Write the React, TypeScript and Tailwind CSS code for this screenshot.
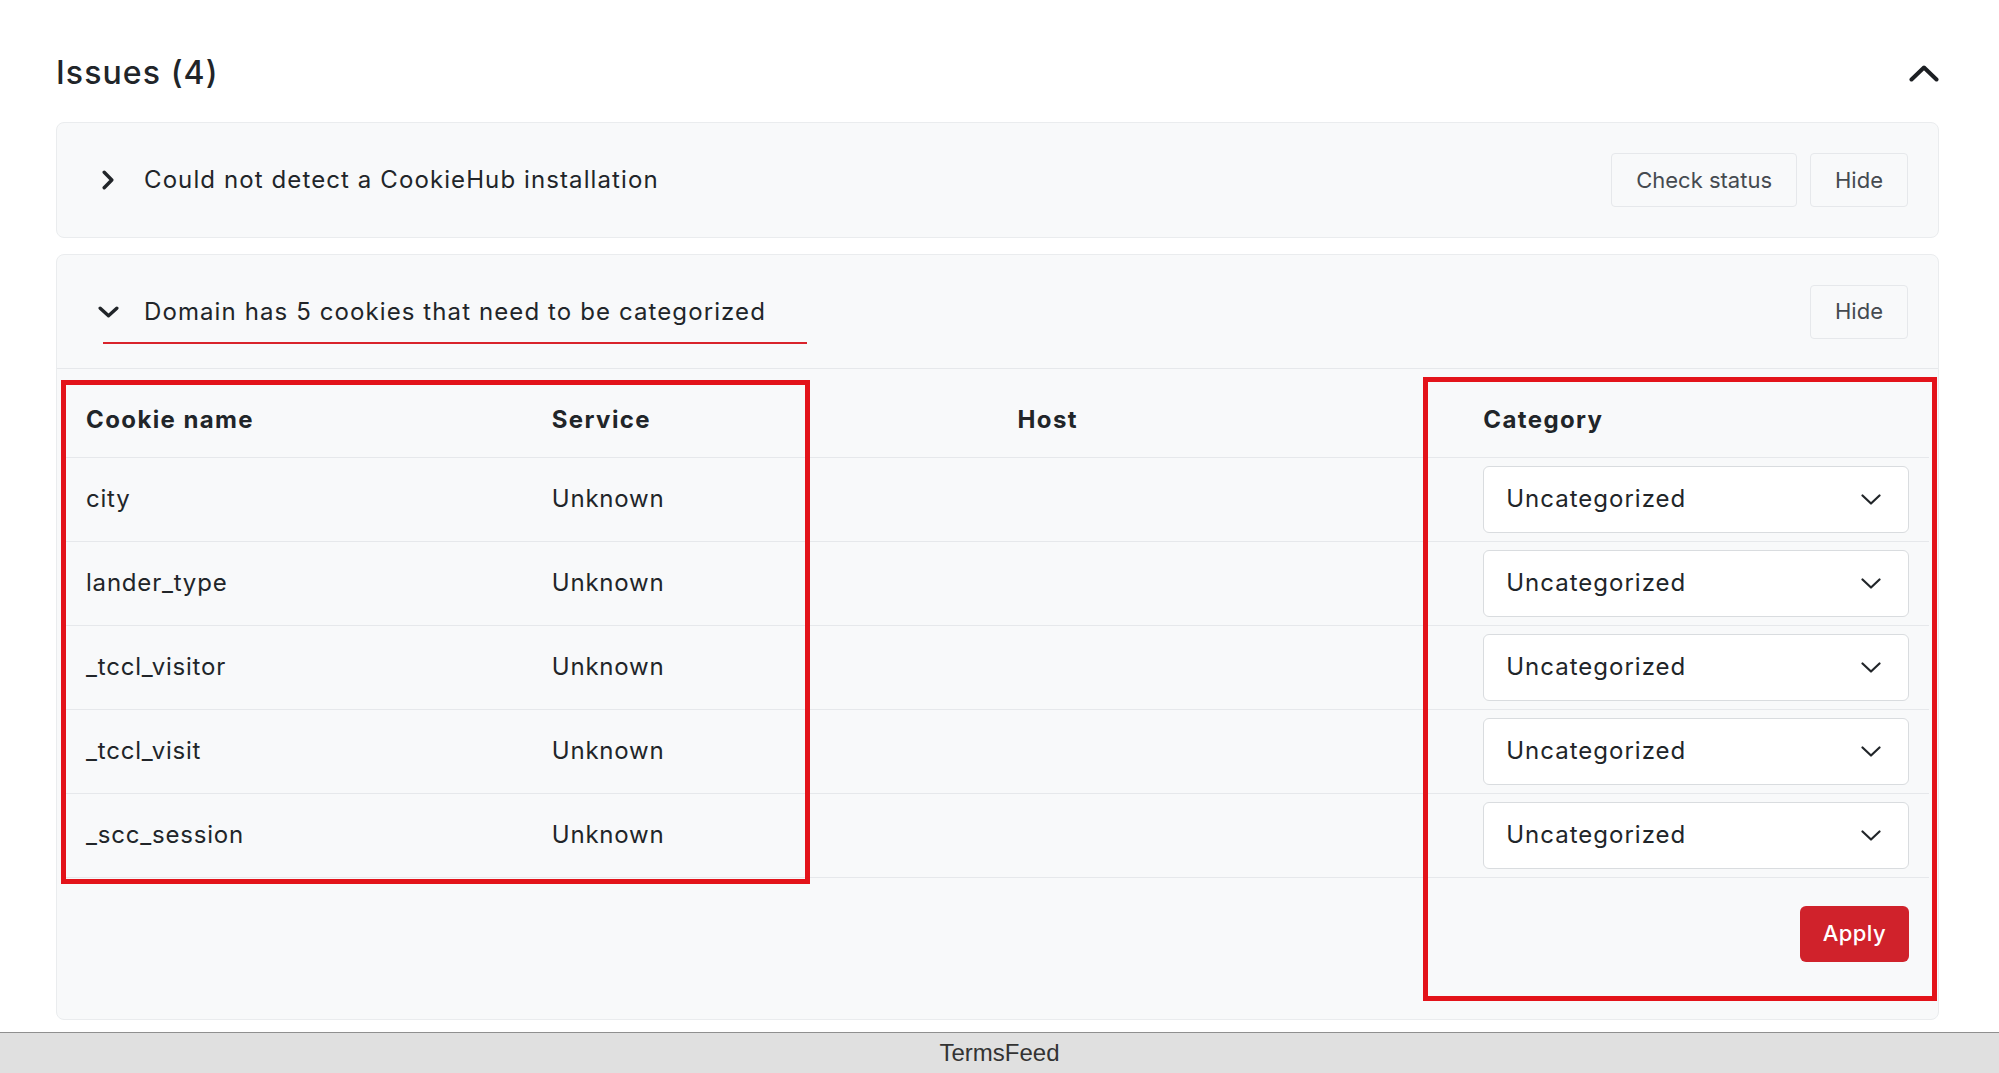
import React from "react";

const cookies = ["city", "lander_type", "_tccl_visitor", "_tccl_visit", "_scc_session"];

function Chevron({ dir, className }: { dir: "right" | "down" | "up"; className?: string }) {
  if (dir === "right")
    return (
      <svg viewBox="0 0 12 20" className={className} fill="none" stroke="currentColor" strokeWidth="3.4" strokeLinecap="round" strokeLinejoin="round">
        <polyline points="2.2,2.2 9.8,10 2.2,17.8" />
      </svg>
    );
  if (dir === "down")
    return (
      <svg viewBox="0 0 21 12" className={className} fill="none" stroke="currentColor" strokeWidth="3.4" strokeLinecap="round" strokeLinejoin="round">
        <polyline points="2.2,2.2 10.5,9.8 18.8,2.2" />
      </svg>
    );
  return (
    <svg viewBox="0 0 30 17" className={className} fill="none" stroke="currentColor" strokeWidth="4" strokeLinecap="round" strokeLinejoin="round">
      <polyline points="2.5,14.5 15,2.5 27.5,14.5" />
    </svg>
  );
}

function GhostButton({ children }: { children: React.ReactNode }) {
  return (
    <button className="h-[54px] rounded-[4px] border border-[#e6e8eb] bg-[#f8f9fa] px-6 text-[22px] text-[#454a50]">
      {children}
    </button>
  );
}

function CategorySelect() {
  return (
    <div className="flex h-[67px] w-full items-center justify-between rounded-[6px] border border-[#d9dcdf] bg-white pl-[22px] pr-[27px] text-[24px] tracking-[1px] text-[#212529]">
      <span>Uncategorized</span>
      <svg viewBox="0 0 20 11" className="h-[11px] w-[20px]" fill="none" stroke="#212529" strokeWidth="2.2" strokeLinecap="round" strokeLinejoin="round">
        <polyline points="1.5,1.5 10,9.5 18.5,1.5" />
      </svg>
    </div>
  );
}

export default function App() {
  return (
    <div className="flex h-[1073px] flex-col bg-white font-['Inter',sans-serif] text-[#212529]">
      <main className="flex-1 pl-[56px] pr-[60px]">
        <div className="mt-[49px] flex h-[48px] items-center justify-between">
          <h1 className="text-[32px] font-medium leading-[48px] tracking-[1.1px]">Issues (4)</h1>
          <Chevron dir="up" className="h-[17px] w-[30px] text-[#1c1f23]" />
        </div>

        <section className="mt-[25px] flex h-[116px] items-center justify-between rounded-[8px] border border-[#eaecee] bg-[#f8f9fa] pl-[39px] pr-[30px]">
          <div className="flex items-center gap-6">
            <span className="flex w-6 justify-center">
              <Chevron dir="right" className="h-[20px] w-[12px] text-[#212529]" />
            </span>
            <span className="text-[24px] tracking-[1.1px]">Could not detect a CookieHub installation</span>
          </div>
          <div className="flex gap-[13px]">
            <GhostButton>Check status</GhostButton>
            <GhostButton>Hide</GhostButton>
          </div>
        </section>

        <section className="relative mt-[16px] h-[766px] rounded-[8px] border border-[#eaecee] bg-[#f8f9fa]">
          <div className="flex h-[114px] items-center justify-between border-b border-[#e6e8eb] pl-[39px] pr-[30px]">
            <div className="flex items-center gap-6">
              <span className="flex w-6 justify-center">
                <Chevron dir="down" className="h-[12px] w-[21px] text-[#212529]" />
              </span>
              <span className="text-[24px] tracking-[1.1px]">Domain has 5 cookies that need to be categorized</span>
            </div>
            <GhostButton>Hide</GhostButton>
          </div>

          <div className="px-[9px]">
            <table className="w-full table-fixed border-collapse text-left text-[24px] tracking-[0.8px]">
              <thead>
                <tr className="h-[88px] border-b border-[#e6e8eb]">
                  <th className="px-5 pt-[14px] font-bold tracking-[1.4px]">Cookie name</th>
                  <th className="px-5 pt-[14px] font-bold tracking-[1.4px]">Service</th>
                  <th className="px-5 pt-[14px] font-bold tracking-[1.4px]">Host</th>
                  <th className="px-5 pt-[14px] font-bold tracking-[1.4px]">Category</th>
                </tr>
              </thead>
              <tbody>
                {cookies.map((name) => (
                  <tr key={name} className="h-[84px] border-b border-[#e6e8eb]">
                    <td className="px-5">{name}</td>
                    <td className="px-5">Unknown</td>
                    <td className="px-5"></td>
                    <td className="px-5">
                      <CategorySelect />
                    </td>
                  </tr>
                ))}
              </tbody>
            </table>
            <div className="mt-[28px] flex justify-end pr-5">
              <button className="h-[56px] rounded-[6px] bg-[#d0222b] px-[23px] text-[22px] font-medium tracking-[0.4px] text-white">
                Apply
              </button>
            </div>
          </div>

          {/* annotation marks drawn over the screenshot */}
          <div className="pointer-events-none absolute left-[46px] top-[87px] h-[2px] w-[704px] bg-[#d9232b]" />
          <div className="pointer-events-none absolute left-[4px] top-[125px] h-[504px] w-[749px] border-[5px] border-[#e3131a]" />
          <div className="pointer-events-none absolute left-[1366px] top-[122px] h-[624px] w-[514px] border-[5px] border-[#e3131a]" />
        </section>
      </main>

      <footer className="flex h-[41px] items-center justify-center border-t border-[#8f8f8f] bg-[#e0e0e0] font-['Liberation_Sans',sans-serif] text-[24px] text-[#333]">
        TermsFeed
      </footer>
    </div>
  );
}
